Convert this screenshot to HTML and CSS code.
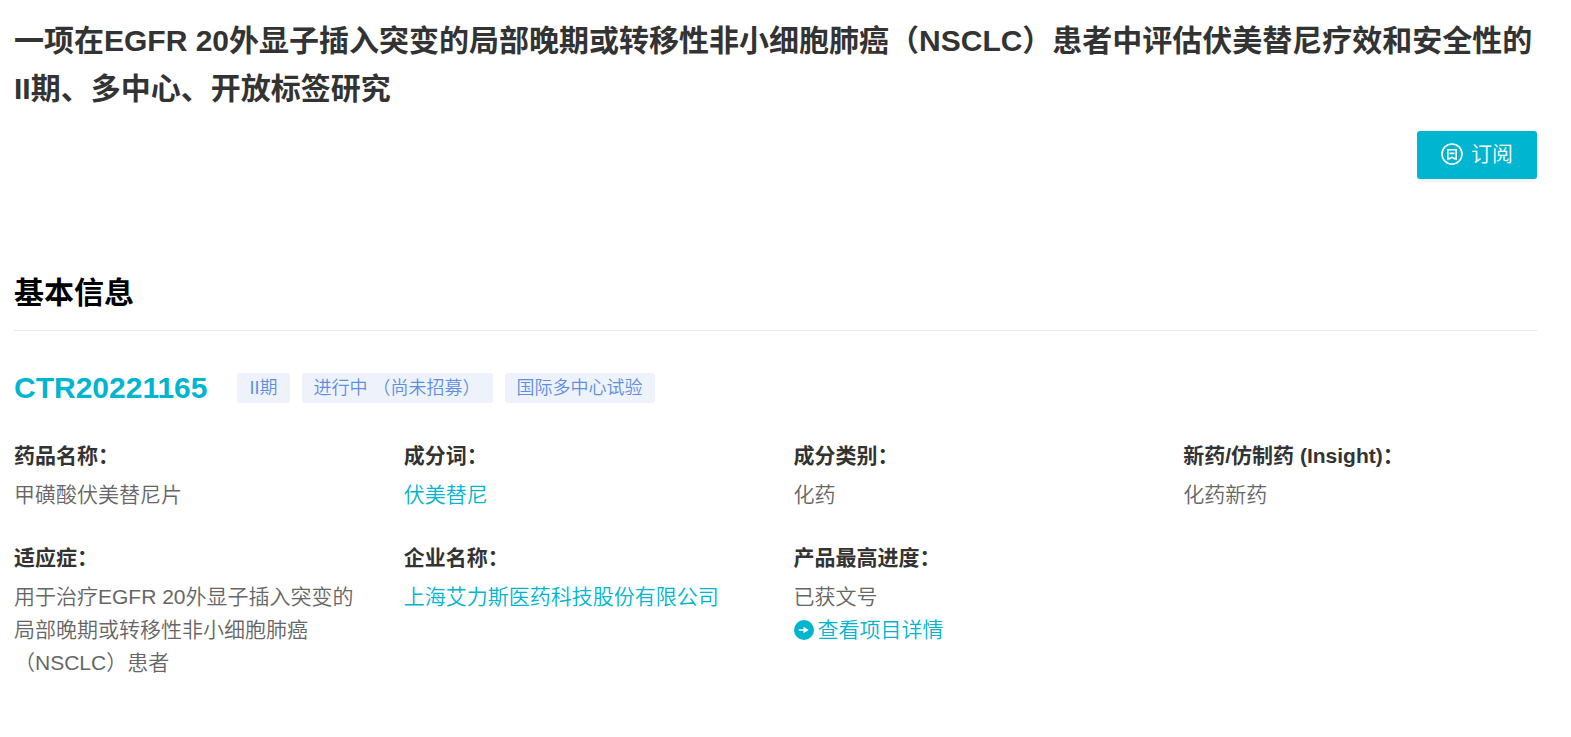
FILE: index.html
```html
<!DOCTYPE html>
<html lang="zh-CN">
<head>
<meta charset="utf-8">
<meta name="viewport" content="width=device-width, initial-scale=1">
<title>CTR20221165</title>
<link rel="stylesheet" href="styles.css">
</head>
<body>
<main class="page">
  <header class="header">
    <h1 class="title">一项在EGFR 20外显子插入突变的局部晚期或转移性非小细胞肺癌（NSCLC）患者中评估伏美替尼疗效和安全性的II期、多中心、开放标签研究</h1>
    <button class="subscribe" type="button">
      <svg class="subscribe-icon" viewBox="0 0 22 22" fill="none" stroke="currentColor" aria-hidden="true">
        <circle cx="11" cy="11" r="10" stroke-width="1.6"/>
        <path d="M6.8 16.4V6.8h8.4v9.6" stroke-width="1.6"/>
        <path d="M6 15.6h2.6l2.4-1.4 2.4 1.4H16M8.6 10.4h4.8" stroke-width="1.6"/>
      </svg>
      <span>订阅</span>
    </button>
  </header>

  <section class="section">
    <h2 class="section-title">基本信息</h2>
    <div class="trial">
      <strong class="trial-id">CTR20221165</strong>
      <ul class="tags">
        <li class="tag">II期</li>
        <li class="tag">进行中 （尚未招募）</li>
        <li class="tag">国际多中心试验</li>
      </ul>
    </div>
    <dl class="fields">
      <div class="field">
        <dt>药品名称：</dt>
        <dd>甲磺酸伏美替尼片</dd>
      </div>
      <div class="field">
        <dt>成分词：</dt>
        <dd><a class="link" href="#ingredient">伏美替尼</a></dd>
      </div>
      <div class="field">
        <dt>成分类别：</dt>
        <dd>化药</dd>
      </div>
      <div class="field">
        <dt>新药/仿制药 (Insight)：</dt>
        <dd>化药新药</dd>
      </div>
      <div class="field">
        <dt>适应症：</dt>
        <dd>用于治疗EGFR 20外显子插入突变的局部晚期或转移性非小细胞肺癌（NSCLC）患者</dd>
      </div>
      <div class="field">
        <dt>企业名称：</dt>
        <dd><a class="link" href="#company">上海艾力斯医药科技股份有限公司</a></dd>
      </div>
      <div class="field">
        <dt>产品最高进度：</dt>
        <dd>已获文号</dd>
        <dd>
          <a class="link detail-link" href="#project">
            <svg class="detail-icon" viewBox="0 0 20 20" aria-hidden="true">
              <circle cx="10" cy="10" r="10" fill="currentColor"/>
              <path d="M4.7 9.2h4.8V6.8l5.2 3.2-5.2 3.2v-2.4H4.7z" fill="#fff"/>
            </svg>
            <span>查看项目详情</span>
          </a>
        </dd>
      </div>
    </dl>
  </section>
</main>
</body>
</html>
```
FILE: styles.css
```css
* {
  box-sizing: border-box;
}

body {
  margin: 0;
  background: #fff;
  color: #666;
  font-family: "Liberation Sans", "Noto Sans CJK SC", sans-serif;
  font-size: 21px;
  font-weight: 350;
  line-height: 33px;
}

h1, h2, dl, dd, ul {
  margin: 0;
  padding: 0;
}

.page {
  padding: 17px 34px 60px 14px;
}

.header {
  display: flex;
  flex-direction: column;
  gap: 18px;
}

.title {
  color: #333;
  font-size: 30px;
  font-weight: 700;
  line-height: 48px;
}

.subscribe {
  display: flex;
  align-items: center;
  justify-content: center;
  align-self: flex-end;
  gap: 8px;
  min-width: 120px;
  height: 48px;
  padding: 0 24px 3px;
  border: 0;
  border-radius: 3px;
  background: #00b5cf;
  box-shadow: 0 3px 0 rgba(0, 0, 0, 0.04);
  color: #fff;
  font: inherit;
  cursor: pointer;
}

.subscribe-icon {
  width: 22px;
  height: 22px;
}

.section {
  margin-top: 90px;
}

.section-title {
  padding-bottom: 13px;
  border-bottom: 1px solid #e8e8e8;
  color: #000;
  font-size: 30px;
  font-weight: 700;
  line-height: 48px;
}

.trial {
  display: flex;
  align-items: center;
  gap: 30px;
  margin-top: 33px;
}

.trial-id {
  color: #00b5cf;
  font-size: 30px;
  font-weight: 700;
  line-height: 48px;
}

.tags {
  display: flex;
  flex-wrap: wrap;
  gap: 12px;
  list-style: none;
}

.tag {
  padding: 0 12px;
  border-radius: 3px;
  background: #eef3fb;
  color: #5f8ee0;
  font-size: 18px;
  line-height: 30px;
}

.fields {
  display: grid;
  grid-template-columns: repeat(4, minmax(0, 1fr));
  gap: 30px 36px;
  margin-top: 27px;
}

.field dt {
  margin-bottom: 6px;
  color: #333;
  font-weight: 700;
}

.link {
  color: #00b5cf;
  text-decoration: none;
}

.detail-link {
  display: flex;
  align-items: center;
  gap: 4px;
}

.detail-icon {
  width: 20px;
  height: 20px;
}
```
